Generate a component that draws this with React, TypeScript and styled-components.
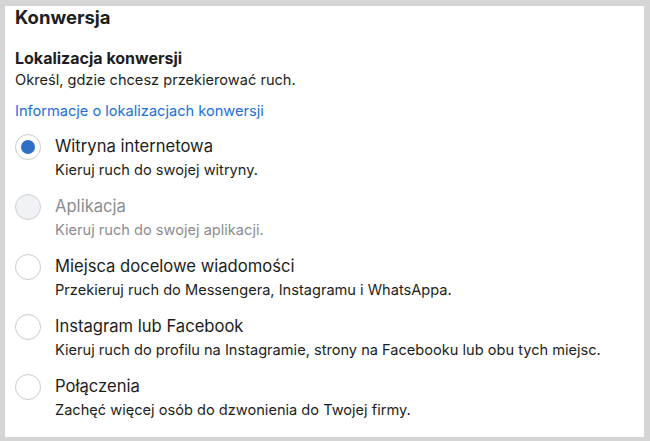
import React from "react";
import styled, { createGlobalStyle } from "styled-components";

const GlobalStyle = createGlobalStyle`
  html, body {
    margin: 0;
    padding: 0;
    background: #d5d5d5;
  }
  body {
    font-family: Inter, "Helvetica Neue", "Liberation Sans", sans-serif;
    color: #1c1e21;
    -webkit-font-smoothing: antialiased;
  }
`;

type Option = {
  title: string;
  desc: string;
  checked?: boolean;
  disabled?: boolean;
};

const options: Option[] = [
  { title: "Witryna internetowa", desc: "Kieruj ruch do swojej witryny.", checked: true },
  { title: "Aplikacja", desc: "Kieruj ruch do swojej aplikacji.", disabled: true },
  {
    title: "Miejsca docelowe wiadomości",
    desc: "Przekieruj ruch do Messengera, Instagramu i WhatsAppa.",
  },
  {
    title: "Instagram lub Facebook",
    desc: "Kieruj ruch do profilu na Instagramie, strony na Facebooku lub obu tych miejsc.",
  },
  { title: "Połączenia", desc: "Zachęć więcej osób do dzwonienia do Twojej firmy." },
];

const App: React.FC = () => {
  return (
    <>
      <GlobalStyle />
      <Frame>
        <Panel>
          <Heading>Konwersja</Heading>
          <Section>
            <SectionTitle>Lokalizacja konwersji</SectionTitle>
            <SectionText>Określ, gdzie chcesz przekierować ruch.</SectionText>
            <InfoLink href="#">Informacje o lokalizacjach konwersji</InfoLink>
            <OptionList>
              {options.map((o) => (
                <OptionRow key={o.title} $disabled={!!o.disabled}>
                  <Radio $checked={!!o.checked} $disabled={!!o.disabled}>
                    {o.checked && <RadioDot />}
                  </Radio>
                  <OptionText>
                    <OptionTitle $disabled={!!o.disabled}>{o.title}</OptionTitle>
                    <OptionDesc $disabled={!!o.disabled}>{o.desc}</OptionDesc>
                  </OptionText>
                </OptionRow>
              ))}
            </OptionList>
          </Section>
        </Panel>
      </Frame>
    </>
  );
};

const Frame = styled.div`
  width: 650px;
  height: 441px;
  box-sizing: border-box;
  padding: 6px 6px 4px 5px;
  background: #d5d5d5;
`;

const Panel = styled.div`
  height: 100%;
  box-sizing: border-box;
  background: #ffffff;
  padding: 0 10px;
  display: flex;
  flex-direction: column;
`;

const Heading = styled.h1`
  margin: 0;
  font-size: 18.5px;
  line-height: 22px;
  font-weight: 700;
  color: #1c1e21;
`;

const Section = styled.div`
  display: flex;
  flex-direction: column;
  margin-top: 18px;
`;

const SectionTitle = styled.h2`
  margin: 0;
  font-size: 16px;
  line-height: 24px;
  font-weight: 700;
  color: #1c1e21;
`;

const SectionText = styled.p`
  margin: 0;
  font-size: 14.6px;
  line-height: 20px;
  color: #1c1e21;
`;

const InfoLink = styled.a`
  margin-top: 11px;
  font-size: 14.6px;
  line-height: 20px;
  color: #216fdb;
  text-decoration: none;
  align-self: flex-start;
`;

const OptionList = styled.div`
  display: flex;
  flex-direction: column;
  gap: 12px;
  margin-top: 13px;
`;

const OptionRow = styled.label<{ $disabled: boolean }>`
  display: flex;
  align-items: flex-start;
  gap: 14px;
  cursor: ${(p) => (p.$disabled ? "default" : "pointer")};
`;

const Radio = styled.span<{ $checked: boolean; $disabled: boolean }>`
  flex: 0 0 auto;
  width: 26px;
  height: 26px;
  box-sizing: border-box;
  border-radius: 50%;
  border: 1px solid ${(p) => (p.$disabled ? "#ccd0d5" : "#c9ccd1")};
  background: ${(p) => (p.$disabled ? "#f0f2f5" : "#ffffff")};
  display: flex;
  align-items: center;
  justify-content: center;
`;

const RadioDot = styled.span`
  width: 14px;
  height: 14px;
  border-radius: 50%;
  background: #2f6fc4;
`;

const OptionText = styled.div`
  display: flex;
  flex-direction: column;
`;

const OptionTitle = styled.span<{ $disabled: boolean }>`
  font-size: 16.6px;
  line-height: 24px;
  color: ${(p) => (p.$disabled ? "#8a8d91" : "#1c1e21")};
`;

const OptionDesc = styled.span<{ $disabled: boolean }>`
  font-size: 14.6px;
  line-height: 24px;
  color: ${(p) => (p.$disabled ? "#8a8d91" : "#1c1e21")};
`;

export default App;
